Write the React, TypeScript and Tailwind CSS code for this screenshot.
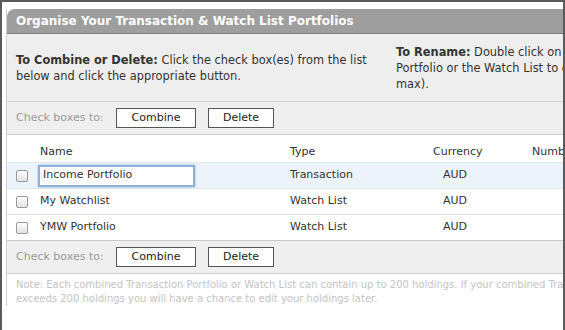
import React from 'react';

const ROWS = [
  { name: 'Income Portfolio', type: 'Transaction', currency: 'AUD', editing: true },
  { name: 'My Watchlist', type: 'Watch List', currency: 'AUD', editing: false },
  { name: 'YMW Portfolio', type: 'Watch List', currency: 'AUD', editing: false },
];

const font = { fontFamily: '"DejaVu Sans", Verdana, sans-serif' };

function Checkbox() {
  return (
    <div className="h-[12px] w-[12px] rounded-[2px] border border-[#9a9a9a] bg-gradient-to-b from-white to-[#e2e2e2]" />
  );
}

function Toolbar() {
  return (
    <div className="flex h-[33px] items-center border-b border-[#cfcfcf] bg-[#efefef] pl-[9px]">
      <span className="w-[100px] text-[11px] text-[#9a9a9a]">Check boxes to:</span>
      <button className="h-[20px] w-[80px] border border-[#555] bg-white text-[11px] text-[#222]">Combine</button>
      <button className="ml-[12px] h-[20px] w-[66px] border border-[#555] bg-white text-[11px] text-[#222]">Delete</button>
    </div>
  );
}

export default function App() {
  return (
    <div
      className="h-[330px] w-[565px] overflow-hidden border-l-2 border-r-2 border-t-2 border-[#5a5a5a] bg-white"
      style={font}
    >
      <div className="ml-[4px] mt-[7px] w-[640px] border-l border-[#cfcfcf]">
        <div className="flex h-[25px] items-center rounded-tl-[8px] border-b border-[#7c7c7c] bg-[#9e9e9e] pl-[9px] text-[12px] font-bold text-white">
          Organise Your Transaction &amp; Watch List Portfolios
        </div>

        <div className="flex h-[68px] items-center border-b border-[#d4d4d4] bg-[#eeeeee] pl-[9px] text-[11.4px] leading-[16px] text-[#333]">
          <p className="w-[380px] shrink-0 whitespace-nowrap">
            <b>To Combine or Delete:</b> Click the check box(es) from the list
            <br />
            below and click the appropriate button.
          </p>
          <p className="shrink-0 whitespace-nowrap">
            <b>To Rename:</b> Double click on the
            <br />
            Portfolio or the Watch List to edit (30 characters
            <br />
            max).
          </p>
        </div>

        <Toolbar />

        <div className="grid h-[28px] grid-cols-[33px_250px_143px_99px_1fr] items-end border-b border-[#e6e6e6] pb-[2px] text-[11px] text-[#333]">
          <div />
          <div>Name</div>
          <div>Type</div>
          <div>Currency</div>
          <div className="whitespace-nowrap">Number of Holdings</div>
        </div>

        {ROWS.map((row, i) => (
          <div
            key={i}
            className={`grid h-[26px] grid-cols-[33px_250px_143px_99px_1fr] items-center border-b text-[11px] text-[#333] ${
              row.editing ? 'border-[#e2e8f0] bg-[#edf3fb]' : 'bg-white'
            } ${i === ROWS.length - 1 ? 'border-[#c8c8c8]' : row.editing ? '' : 'border-[#dedede]'}`}
          >
            <div className="pl-[9px]">
              <Checkbox />
            </div>
            <div className="-ml-[2px]">
              {row.editing ? (
                <div className="flex h-[22px] w-[157px] items-center border-2 border-[#8db2dc] bg-white pl-[3px] shadow-[0_0_2px_#8db2dc]">
                  {row.name}
                </div>
              ) : (
                <span className="pl-[2px]">{row.name}</span>
              )}
            </div>
            <div>{row.type}</div>
            <div className="pl-[10px]">{row.currency}</div>
            <div />
          </div>
        ))}

        <Toolbar />

        <div className="whitespace-nowrap pl-[9px] pt-[4px] text-[10px] leading-[14px] text-[#c4c4c4]">
          Note: Each combined Transaction Portfolio or Watch List can contain up to 200 holdings. If your combined Transaction Portfolio
          <br />
          exceeds 200 holdings you will have a chance to edit your holdings later.
        </div>
      </div>
    </div>
  );
}
